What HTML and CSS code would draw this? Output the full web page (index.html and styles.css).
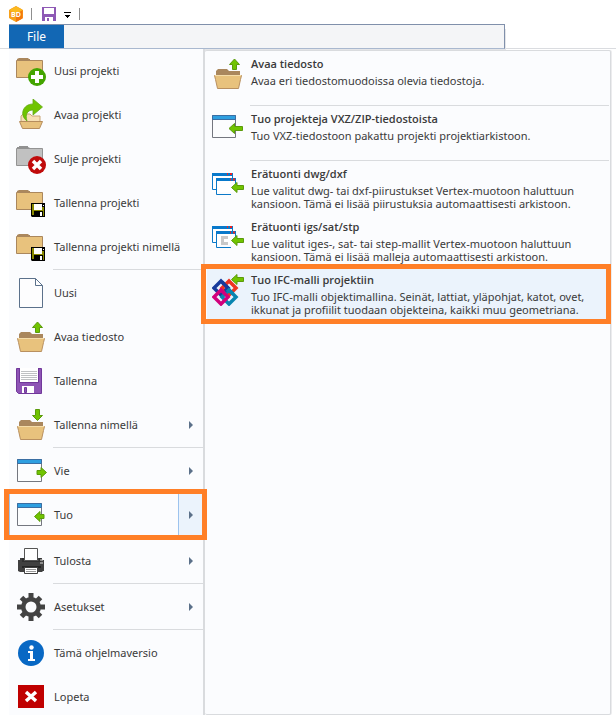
FILE: index.html
```html
<!DOCTYPE html>
<html lang="fi">
<head>
<meta charset="utf-8">
<meta name="viewport" content="width=device-width, initial-scale=1">
<title>Vertex BD</title>
<link rel="stylesheet" href="styles.css">
</head>
<body>
<svg class="defs" aria-hidden="true">
  <defs>
    <symbol id="folder" viewBox="0 0 32 32">
      <path d="M2 5V4l2-1h9l2 2h12v3H2z" fill="#aa875d"/>
      <path d="M1.500 5.500h26v17h-26z" fill="#e8c27d" stroke="#aa875d"/>
      <path d="M2 4h4V3h7v1h2v1H2z" fill="#aa875d"/>
    </symbol>
    <symbol id="basket" viewBox="0 0 32 32">
      <path d="M4 18v-5l2-2h9l2 2h11v5z" fill="#aa875d"/>
      <path d="M2.500 17.500h27l-1 4-2 9h-21l-2-9z" fill="#e8c27d" stroke="#b99060"/>
      <path d="M3 17.500h26" stroke="#f5dca8"/>
    </symbol>
    <symbol id="window" viewBox="0 0 32 32">
      <path d="M2.500 4.500h24v22h-24z" fill="#fcfdfe" stroke="#74777f"/>
      <path d="M2.500 4.500h24v4h-24z" fill="#2e9fe0" stroke="#3a6ea3"/>
    </symbol>
    <symbol id="windows" viewBox="0 0 32 32">
      <path d="M1 3h21v19H1z" fill="#fff"/>
      <path d="M1.500 4v15.500H6M21.500 4v4" fill="none" stroke="#0b79c8"/>
      <path d="M1 3h21v3H1zM5 8h20v3H5z" fill="#0879cb"/>
      <path d="M5.500 10v14.500H20M24.500 10v5" fill="none" stroke="#0b79c8"/>
      <path d="M16 4h1m2 0h2M19 9.500h1m2 0h2" stroke="#e22" stroke-width="2"/>
    </symbol>
    <symbol id="floppy" viewBox="0 0 15 14">
      <path d="M0 0h14v14H1l-1-1z"/>
      <path d="M1 1h2v11H1zM11 4h2v9h-1V8H3V7h8z" fill="#898900"/>
      <path d="M3 1h8v6H3z" fill="#fff"/>
      <path d="M9 9h2v4H9zM12 2h1v1h-1z" fill="#fff"/>
    </symbol>
  </defs>
</svg>

<header class="titlebar">
  <svg class="logo" viewBox="0 0 16 16" role="img" aria-label="BD">
    <path d="M8 .5 14.500 4v8L8 15.500 1.500 12V4z" fill="#f7a11b" stroke="#f7a11b" stroke-linejoin="round"/>
    <path d="M8 8v8l6.500-3.500V4z" fill="#f4770f"/>
    <path d="M1.500 4 8 .5 14.500 4 8 8z" fill="#fbb91f"/>
    <text x="8" y="10.500" class="logo-text">BD</text>
  </svg>
  <span class="divider"></span>
  <button class="quick" aria-label="Tallenna">
    <svg viewBox="0 0 14 14" width="14" height="14"><path d="M0 0h14v14H0z" fill="#8e59b5"/><path d="M2 1h10v6H2zM3 10h8v4H3z" fill="#fff"/><path d="M5 11h2v3H5z" fill="#8e59b5"/></svg>
  </button>
  <button class="quick more" aria-label="Mukauta">
    <svg viewBox="0 0 7 6" width="7" height="6"><path d="M0 0h7v1H0zM1 3h5v1H5v1H4v1H3V5H2V4H1z"/></svg>
  </button>
  <span class="divider"></span>
</header>

<div class="tabrow">
  <div class="tabs"><button class="tab">File</button></div>
</div>

<main class="backstage">
  <nav class="menu" aria-label="File">
    <button class="item"><svg class="icon" viewBox="0 0 32 32"><use href="#folder"/><circle cx="22" cy="22" r="9" fill="#43a400"/><path d="M22 16v12m-6-6h12" stroke="#fff" stroke-width="4"/></svg><span class="label">Uusi projekti</span></button>
    <button class="item"><svg class="icon" viewBox="0 0 32 32"><path d="M6 24v-7l2-2h7l2 2h8v7z" fill="#f7dfb4" stroke="#c9a677"/><path d="M4.500 22.500h23l-3 7h-17z" fill="#e8c27d" stroke="#b68d5d"/><path d="M12 22C4 16 8 5 18 5V0l9.500 8L18 16v-5c-6 0-8 5-6 11z" fill="#70c400" stroke="#64a916" stroke-width=".8"/></svg><span class="label">Avaa projekti</span></button>
    <button class="item"><svg class="icon" viewBox="0 0 32 32"><path d="M1.500 5.500h26v17h-26z" fill="#c1c1c1" stroke="#939393"/><path d="M2 4h2V3h9v1l2 1v1H2z" fill="#919191"/><circle cx="22" cy="22" r="9" fill="#c00b0b"/><path d="m18 18 8 8m0-8-8 8" stroke="#fff" stroke-width="3.500"/></svg><span class="label">Sulje projekti</span></button>
    <button class="item"><svg class="icon" viewBox="0 0 32 32"><use href="#folder"/><use href="#floppy" x="16" y="16" width="15" height="14"/></svg><span class="label">Tallenna projekti</span></button>
    <button class="item"><svg class="icon" viewBox="0 0 32 32"><use href="#folder"/><use href="#floppy" x="16" y="16" width="15" height="14"/></svg><span class="label">Tallenna projekti nimellä</span></button>
    <hr>
    <button class="item"><svg class="icon" viewBox="0 0 32 32"><path d="M4.500 1.500h16l7 7v22h-23z" fill="#fdfdfe" stroke="#5b718b"/><path d="M20.500 1.500v7h7" fill="none" stroke="#5b718b"/></svg><span class="label">Uusi</span></button>
    <button class="item"><svg class="icon" viewBox="0 0 32 32"><use href="#basket"/><path d="m22.500 1 5 5.500h-3v5h-4v-5h-3z" fill="#70c400" stroke="#5b9a0c"/></svg><span class="label">Avaa tiedosto</span></button>
    <button class="item"><svg class="icon" viewBox="0 0 32 32"><path d="M1.500 3.500h25v25H3.500l-2-2z" fill="#8e54b5" stroke="#71389a"/><path d="M5 3h18v14H5z" fill="#fff"/><path d="M6 6.500h16M6 8.500h16M6 10.500h16M6 12.500h16M6 14.500h16" stroke="#bfc1c3"/><path d="M4.500 3v14.500h19V3" fill="none" stroke="#71389a"/><path d="M7 21h12v7H7z" fill="#fff"/><path d="M9.500 22.500h2v5h-2z" fill="#8e54b5" stroke="#71389a"/></svg><span class="label">Tallenna</span></button>
    <button class="item"><svg class="icon" viewBox="0 0 32 32"><use href="#basket"/><path d="m22.500 11.500 5-5h-3v-6h-4v6h-3z" fill="#70c400" stroke="#5b9a0c"/></svg><span class="label">Tallenna nimellä</span><i class="caret"></i></button>
    <hr>
    <button class="item"><svg class="icon" viewBox="0 0 32 32"><use href="#window"/><path d="M31.500 17.500 26 12.500v3h-4v4h4v3z" fill="#70c400" stroke="#5b9a0c"/></svg><span class="label">Vie</span><i class="caret"></i></button>
    <button class="item current"><svg class="icon" viewBox="0 0 32 32"><use href="#window"/><path d="m19.500 17.500 5.500-5v3h4v4h-4v3z" fill="#70c400" stroke="#5b9a0c"/></svg><span class="label">Tuo</span><i class="caret"></i></button>
    <hr>
    <button class="item"><svg class="icon" viewBox="0 0 32 32"><path d="M3 15h2v-2h22v2h2v11h-1l-1 1H5l-2-1z" fill="#404040"/><path d="M9.500 3.500h13v12h-13z" fill="#fff" stroke="#555"/><path d="M7 13h2v3h15v-3h2v4H7z" fill="#303030"/><path d="M25 15h3m-3 3h3" stroke="#ddd"/><path d="M7 21h19v2H7z" fill="#252525"/><path d="M9.500 22.500h13v6h-13z" fill="#fff" stroke="#404040"/><path d="M11 24.500h10m-10 2h10" stroke="#999"/></svg><span class="label">Tulosta</span><i class="caret"></i></button>
    <hr>
    <button class="item"><svg class="icon" viewBox="0 0 32 32"><g stroke="#434343" stroke-width="5"><path d="M16 2v28M2 16h28"/><path d="m6.500 6.500 19 19m0-19-19 19"/></g><circle cx="16" cy="16" r="10" fill="#434343"/><circle cx="16" cy="16" r="5.500" fill="#fbfcfe"/></svg><span class="label">Asetukset</span><i class="caret"></i></button>
    <hr>
    <button class="item"><svg class="icon" viewBox="0 0 32 32"><circle cx="16" cy="16" r="13" fill="#0868c4"/><circle cx="16.500" cy="10.500" r="2.200" fill="#fff"/><path d="M13 14h5v8h2v2h-7v-2h2v-6h-2z" fill="#fff"/></svg><span class="label">Tämä ohjelmaversio</span></button>
    <button class="item"><svg class="icon" viewBox="0 0 32 32"><path d="M3 4h26v23H3z" fill="#c00000"/><path d="m11 11 10 9m0-9-10 9" stroke="#fff" stroke-width="3.500"/></svg><span class="label">Lopeta</span></button>
  </nav>

  <section class="panel" aria-label="Tuo">
    <button class="entry ruled"><svg class="icon" viewBox="0 0 32 32"><use href="#basket"/><path d="m22.500 1 5 5.500h-3v5h-4v-5h-3z" fill="#70c400" stroke="#5b9a0c"/></svg><span class="text"><strong>Avaa tiedosto</strong><span>Avaa eri tiedostomuodoissa olevia tiedostoja.</span></span></button>
    <button class="entry ruled"><svg class="icon" viewBox="0 0 32 32"><path d="M.5 2.500h23v22H.5z" fill="#fcfdfe" stroke="#74777f"/><path d="M.5 2.500h23v4H.5z" fill="#2e9fe0" stroke="#3a6ea3"/><path d="m17 15.500 5.500-5v3h8v4h-8v3z" fill="#70c400" stroke="#5b9a0c"/></svg><span class="text"><strong>Tuo projekteja VXZ/ZIP-tiedostoista</strong><span>Tuo VXZ-tiedostoon pakattu projekti projektiarkistoon.</span></span></button>
    <button class="entry"><svg class="icon" viewBox="0 0 32 32"><use href="#windows" x="-1" y="2" width="32" height="32"/><path d="m19.500 19.500 5.500-5v3h6.500v4H25v3z" fill="#70c400" stroke="#5b9a0c"/></svg><span class="text"><strong>Erätuonti dwg/dxf</strong><span>Lue valitut dwg- tai dxf-piirustukset Vertex-muotoon haluttuun<br>kansioon. Tämä ei lisää piirustuksia automaattisesti arkistoon.</span></span></button>
    <button class="entry"><svg class="icon" viewBox="0 0 32 32"><use href="#windows" x="-1" y="2" width="32" height="32"/><path d="M16 16.500h-5.500v6H16" fill="none" stroke="#c8c8c8" stroke-width="3"/><path d="m19.500 19.500 5.500-5v3h6.500v4H25v3z" fill="#70c400" stroke="#5b9a0c"/></svg><span class="text"><strong>Erätuonti igs/sat/stp</strong><span>Lue valitut iges-, sat- tai step-mallit Vertex-muotoon haluttuun<br>kansioon. Tämä ei lisää malleja automaattisesti arkistoon.</span></span></button>
    <button class="entry chosen"><svg class="icon" viewBox="0 0 32 32"><g fill="none" stroke-width="3.500" transform="translate(0 4)"><path d="m9 3 7 7-7 7-7-7z" stroke="#173b9c"/><path d="m17 3 7 7-7 7-7-7z" stroke="#ee3322"/><path d="m17 12 7 7-7 7-7-7z" stroke="#0885b0"/><path d="m9 12 7 7-7 7-7-7z" stroke="#d1007c"/><path d="m10 4 6 6-3 3" stroke="#173b9c"/><path d="m15 14 2-2 4 4" stroke="#0885b0"/></g><path d="M19.500 5.500 25 .5v3h6.500v4H25v3z" fill="#70c400" stroke="#5b9a0c"/></svg><span class="text"><strong>Tuo IFC-malli projektiin</strong><span>Tuo IFC-malli objektimallina. Seinät, lattiat, yläpohjat, katot, ovet,<br>ikkunat ja profiilit tuodaan objekteina, kaikki muu geometriana.</span></span></button>
  </section>
</main>
</body>
</html>
```
FILE: styles.css
```css
* { box-sizing: border-box; }

body {
  margin: 0;
  background: #fff;
  color: #3a3a3a;
  font: 11px/13px "Noto Sans", "Open Sans", sans-serif;
}

button {
  margin: 0;
  padding: 0;
  border: 0;
  background: none;
  color: inherit;
  font: inherit;
  text-align: left;
}

svg { display: block; flex: none; }
.defs { position: absolute; width: 0; height: 0; }

.titlebar {
  display: flex;
  align-items: center;
  height: 24px;
  padding: 3px 8px 0;
}
.logo { width: 16px; height: 16px; margin-right: 7px; }
.logo-text { fill: #fff; font: bold 7px "Open Sans", sans-serif; text-anchor: middle; }
.divider { width: 1px; height: 12px; background: #8f8f8f; }
.quick { margin-left: 10px; }
.quick.more { margin: 3px 8px 0; }

.tabrow {
  display: flex;
  height: 25px;
  padding: 0 111px 0 9px;
  border-bottom: 1px solid #dadce0;
}
.tabs {
  flex: 1;
  height: 25px;
  border: solid #8090ab;
  border-width: 1px 1px 1px 0;
  border-bottom-color: #a9b8cf;
  background: #f4f5f7;
  box-shadow: 2px 4px 0 -1px #e4e5e8;
}
.tab {
  width: 55px;
  height: 23px;
  background: #1267b4;
  color: #fff;
  font-size: 12px;
  text-align: center;
}

.backstage {
  display: flex;
  height: calc(100vh - 49px);
  min-height: 670px;
  padding: 0 5px 4px 9px;
}

.menu {
  width: 196px;
  flex: none;
  border-right: 2px solid #d9dbde;
  background: #fbfcfe;
}
.menu hr {
  height: 1px;
  margin: 0 0 1px 44px;
  border: 0;
  background: #d9dbde;
}
.item {
  position: relative;
  display: flex;
  align-items: center;
  gap: 7px;
  width: 100%;
  height: 44px;
  padding-left: 6px;
}
.label { padding-bottom: 2px; }
.icon { width: 32px; height: 32px; }
.caret {
  margin: 0 10px 0 auto;
  border: solid transparent;
  border-width: 4px 0 4px 4px;
  border-left-color: #5b7089;
}
.current {
  border-left: 1px solid #9cc3ee;
  padding-left: 5px;
  background: linear-gradient(#9cc3ee, #9cc3ee) 168px 0 / 1px 100% no-repeat,
              linear-gradient(#ebf3fc, #ebf3fc) 169px 0 / 24px 100% no-repeat;
}
.current::after, .chosen::after {
  content: "";
  position: absolute;
  z-index: 1;
  border: 5px solid #ff7f27;
}
.current::after { inset: -4px -4px -3px -6px; }

.panel {
  flex: 1;
  margin-top: 1px;
  padding: 0 1px 0 2px;
  border: solid #d9dbde;
  border-width: 1px 1px 1px 0;
  border-radius: 2px;
  background: #fbfcfe;
  box-shadow: 1px 0 0 #ececee;
}
.entry {
  position: relative;
  display: flex;
  gap: 7px;
  width: 100%;
  height: 53px;
  padding: 5px 0 0 5px;
}
.entry .icon { margin-top: 2px; }
.ruled {
  height: 55px;
  background: linear-gradient(#d9dbde, #d9dbde) 43px 100% / 100% 1px no-repeat;
}
.text strong, .text span { display: block; white-space: nowrap; }
.text strong { margin-bottom: 2px; font-family: "Open Sans", sans-serif; font-weight: 600; line-height: 16px; }
.chosen { background: #ebf3fc; }
.chosen::after { inset: -3px -2px -4px -6px; }
```
